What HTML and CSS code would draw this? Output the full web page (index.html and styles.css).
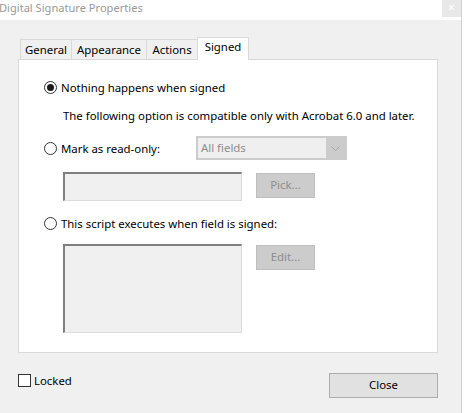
FILE: index.html
```html
<!DOCTYPE html>
<html>
<head>
<meta charset="utf-8">
<link rel="stylesheet" href="styles.css">
</head>
<body>
<div class="window">
  <div class="titlebar">
    <span class="title">Digital Signature Properties</span>
    <span class="close-x">×</span>
  </div>
  <div class="tabs">
    <div class="tab t-general">General</div>
    <div class="tab t-appearance">Appearance</div>
    <div class="tab t-actions">Actions</div>
    <div class="tab active">Signed</div>
  </div>
  <div class="panel">
    <div class="row r1"><span class="radio checked"></span><span class="label">Nothing happens when signed</span></div>
    <div class="row r2 indent">The following option is compatible only with Acrobat 6.0 and later.</div>
    <div class="row r3">
      <span class="radio"></span><span class="label">Mark as read-only:</span>
      <div class="select"><span class="select-value">All fields</span><span class="select-arrow"><svg width="9" height="5" viewBox="0 0 9 5"><path d="M0.5 0.5 L4.5 4.5 L8.5 0.5" fill="none" stroke="#a8a8a8" stroke-width="1"/></svg></span></div>
    </div>
    <div class="row r4 indent">
      <div class="field"></div>
      <div class="btn-disabled">Pick...</div>
    </div>
    <div class="row r5"><span class="radio"></span><span class="label">This script executes when field is signed:</span></div>
    <div class="row r6 indent">
      <div class="field tall"></div>
      <div class="btn-disabled">Edit...</div>
    </div>
  </div>
  <div class="footer">
    <div class="locked"><span class="checkbox"></span><span class="label">Locked</span></div>
    <div class="btn">Close</div>
  </div>
</div>
</body>
</html>
```

FILE: styles.css
```css
html, body {
  margin: 0;
  padding: 0;
  background: #ffffff;
}
body {
  font-family: "Noto Sans", "Open Sans", sans-serif;
  font-size: 11.4px;
  color: #000;
}
.window {
  width: 461px;
  height: 413px;
  background: #f0f0f0;
  border-right: 1px solid #d0d0d0;
  display: flex;
  flex-direction: column;
}
.titlebar {
  height: 20px;
  background: #fff;
  display: flex;
  justify-content: space-between;
  align-items: flex-start;
}
.title {
  color: #999;
  line-height: 15px;
  margin-left: -1px;
  font-size: 11.1px;
}
.close-x {
  width: 19px;
  height: 17px;
  background: #e8e8e8;
  color: #fff;
  text-align: center;
  line-height: 15px;
  font-size: 12px;
}
.tabs {
  display: flex;
  align-items: flex-end;
  height: 23px;
  margin-top: 17px;
  margin-left: 20px;
  margin-bottom: -1px;
  position: relative;
  z-index: 1;
}
.tab {
  height: 20px;
  box-sizing: border-box;
  border: 1px solid #d9d9d9;
  border-bottom: none;
  margin-left: -1px;
  text-align: center;
  line-height: 20px;
  margin-bottom: 1px;
  background: #f0f0f0;
  width: 52px;
}
.tab.t-general { margin-left: 0; }
.tab.t-appearance { width: 76px; }
.tab.active {
  height: 23px;
  margin-bottom: 0;
  background: #fff;
  line-height: 18px;
}
.panel {
  margin-left: 18px;
  width: 420px;
  height: 294px;
  box-sizing: border-box;
  background: #fff;
  border: 1px solid #d9d9d9;
  padding-left: 25px;
  display: flex;
  flex-direction: column;
}
.row {
  display: flex;
  align-items: center;
}
.indent { padding-left: 19px; }
.r1 { height: 20px; margin-top: 17px; }
.r2 { height: 20px; margin-top: 8px; }
.r3 { height: 24px; margin-top: 11px; }
.r4 { margin-top: 12px; align-items: flex-start; }
.r5 { height: 20px; margin-top: 12px; }
.r6 { margin-top: 11px; align-items: flex-start; }
.radio {
  width: 13px;
  height: 13px;
  box-sizing: border-box;
  border: 1px solid #333;
  border-radius: 50%;
  display: flex;
  align-items: center;
  justify-content: center;
  flex: none;
}
.radio.checked::after {
  content: "";
  width: 7px;
  height: 7px;
  border-radius: 50%;
  background: #1a1a1a;
}
.label { margin-left: 4px; }
.select {
  margin-left: auto;
  margin-right: 90px;
  width: 151px;
  height: 24px;
  box-sizing: border-box;
  background: #cccccc;
  display: flex;
  padding: 2px;
}
.select-value {
  flex: 1;
  background: #efefef;
  color: #8d8d8d;
  line-height: 20px;
  padding-left: 3px;
}
.select-arrow {
  width: 19px;
  display: flex;
  align-items: center;
  justify-content: center;
}
.field {
  width: 179px;
  height: 29px;
  box-sizing: border-box;
  background: #f0f0f0;
  border-top: 2px solid #7f7f7f;
  border-left: 2px solid #7f7f7f;
  border-right: 1px solid #dcdcdc;
  border-bottom: 1px solid #dcdcdc;
}
.field.tall { height: 89px; }
.btn-disabled {
  margin-left: 14px;
  margin-top: 1px;
  width: 59px;
  height: 25px;
  box-sizing: border-box;
  background: #cccccc;
  border: 1px solid #bfbfbf;
  color: #8d8d8d;
  text-align: center;
  line-height: 22px;
}
.footer {
  display: flex;
  justify-content: space-between;
  align-items: flex-start;
  margin-top: 20px;
  margin-left: 18px;
  margin-right: 23px;
}
.locked {
  display: flex;
  align-items: center;
  margin-top: 1px;
}
.checkbox {
  width: 13px;
  height: 13px;
  box-sizing: border-box;
  border: 1px solid #333;
  background: #fff;
}
.locked .label { margin-left: 3px; line-height: 13px; }
.btn {
  width: 109px;
  height: 25px;
  box-sizing: border-box;
  background: #e1e1e1;
  border: 1px solid #adadad;
  text-align: center;
  line-height: 22px;
}
```
